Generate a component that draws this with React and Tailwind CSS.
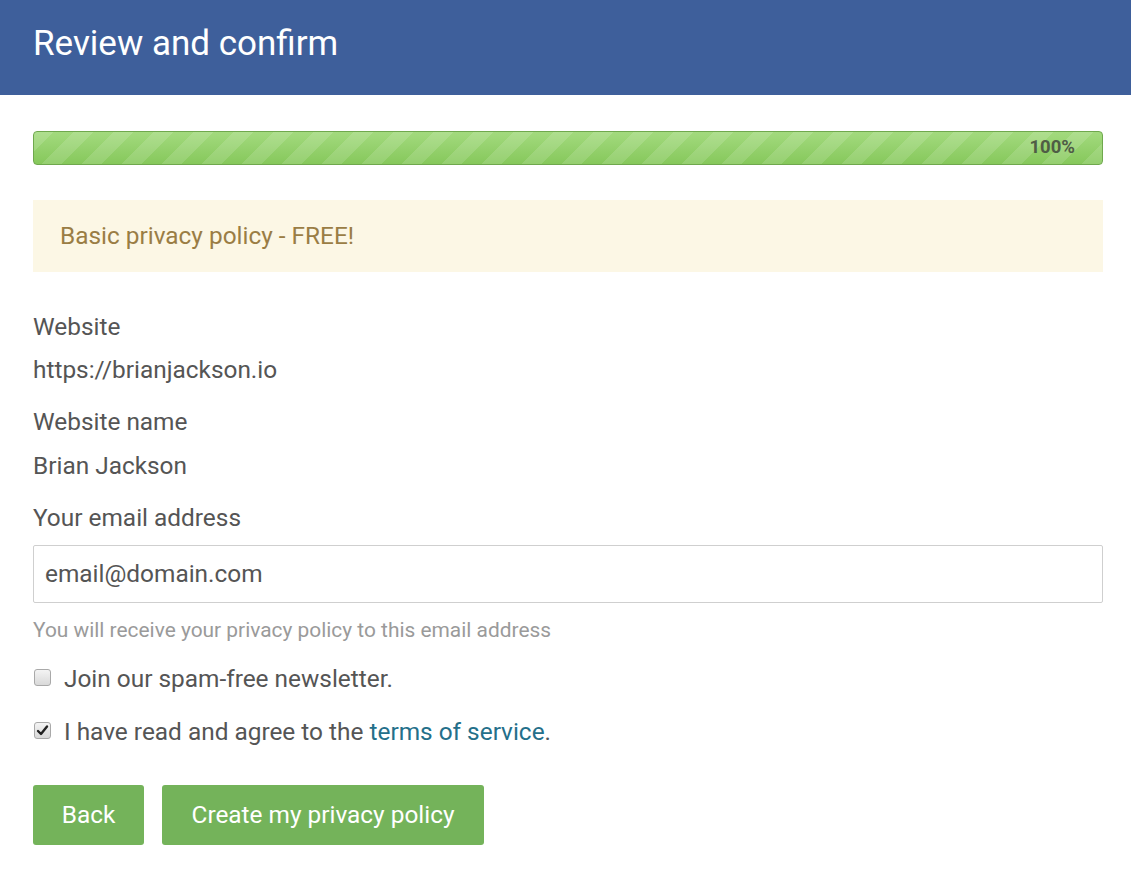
export default function App() {
  const font = { fontFamily: "Roboto, 'Noto Sans', sans-serif" };
  return (
    <div className="w-[1131px] min-h-[880px] bg-white" style={font}>
      <div className="h-[95px] bg-[#3e5f9b] pl-[33px] flex items-center">
        <h1 className="text-[35px] leading-[40px] text-white font-normal pb-[8px]">Review and confirm</h1>
      </div>
      <div className="pl-[33px] pr-[28px]">
        <div className="mt-[36px] h-[34px] rounded-[4px] border border-[#6fa84d] bg-gradient-to-b from-[#a3da7e] to-[#86c85b] overflow-hidden">
          <div className="h-full bg-[linear-gradient(135deg,rgba(255,255,255,.13)_25%,transparent_25%,transparent_50%,rgba(255,255,255,.13)_50%,rgba(255,255,255,.13)_75%,transparent_75%,transparent)] bg-[length:40px_40px] flex items-center justify-end pr-[27px]">
            <span className="text-[18.5px] font-bold text-[#4f5d45]">100%</span>
          </div>
        </div>
        <div className="mt-[35px] h-[72px] bg-[#fcf7e5] flex items-center pl-[27px]">
          <span className="text-[24.4px] text-[#9a7d44]">Basic privacy policy - FREE!</span>
        </div>
        <div className="mt-[40px] text-[24.4px] leading-[30px] text-[#555]">
          <div>Website</div>
          <div className="mt-[13px]">https://brianjackson.io</div>
          <div className="mt-[22px]">Website name</div>
          <div className="mt-[14px]">Brian Jackson</div>
          <div className="mt-[22px]">Your email address</div>
        </div>
        <div className="mt-[12px] h-[58px] border border-[#cfcfcf] rounded-[2px] flex items-center pl-[11px] text-[24.4px] text-[#555]">
          email@domain.com
        </div>
        <div className="mt-[17px] text-[20.9px] leading-[20px] text-[#9a9a9a]">You will receive your privacy policy to this email address</div>
        <div className="mt-[24px] flex items-center h-[30px] text-[24.4px] text-[#555]">
          <span className="ml-[1px] w-[17px] h-[17px] rounded-[3px] border border-[#a9a9a9] bg-gradient-to-b from-[#f4f4f4] to-[#d9d9d9] mb-[4px]"></span>
          <span className="ml-[13px]">Join our spam-free newsletter.</span>
        </div>
        <div className="mt-[23px] flex items-center h-[30px] text-[24.4px] text-[#555]">
          <span className="ml-[1px] w-[17px] h-[17px] rounded-[3px] border border-[#a9a9a9] bg-gradient-to-b from-[#f4f4f4] to-[#d9d9d9] mb-[4px] flex items-center justify-center">
            <svg width="13" height="13" viewBox="0 0 13 13"><path d="M2 7 L5 10 L11 2.5" fill="none" stroke="#222" strokeWidth="2.4" strokeLinecap="round" strokeLinejoin="round" /></svg>
          </span>
          <span className="ml-[13px]">I have read and agree to the <span className="text-[#246f8a]">terms of service</span>.</span>
        </div>
        <div className="mt-[38px] flex gap-[18px]">
          <button className="h-[60px] w-[111px] rounded-[3px] bg-[#74b35a] text-white text-[24.4px]">Back</button>
          <button className="h-[60px] w-[322px] rounded-[3px] bg-[#74b35a] text-white text-[24.4px]">Create my privacy policy</button>
        </div>
      </div>
    </div>
  );
}
